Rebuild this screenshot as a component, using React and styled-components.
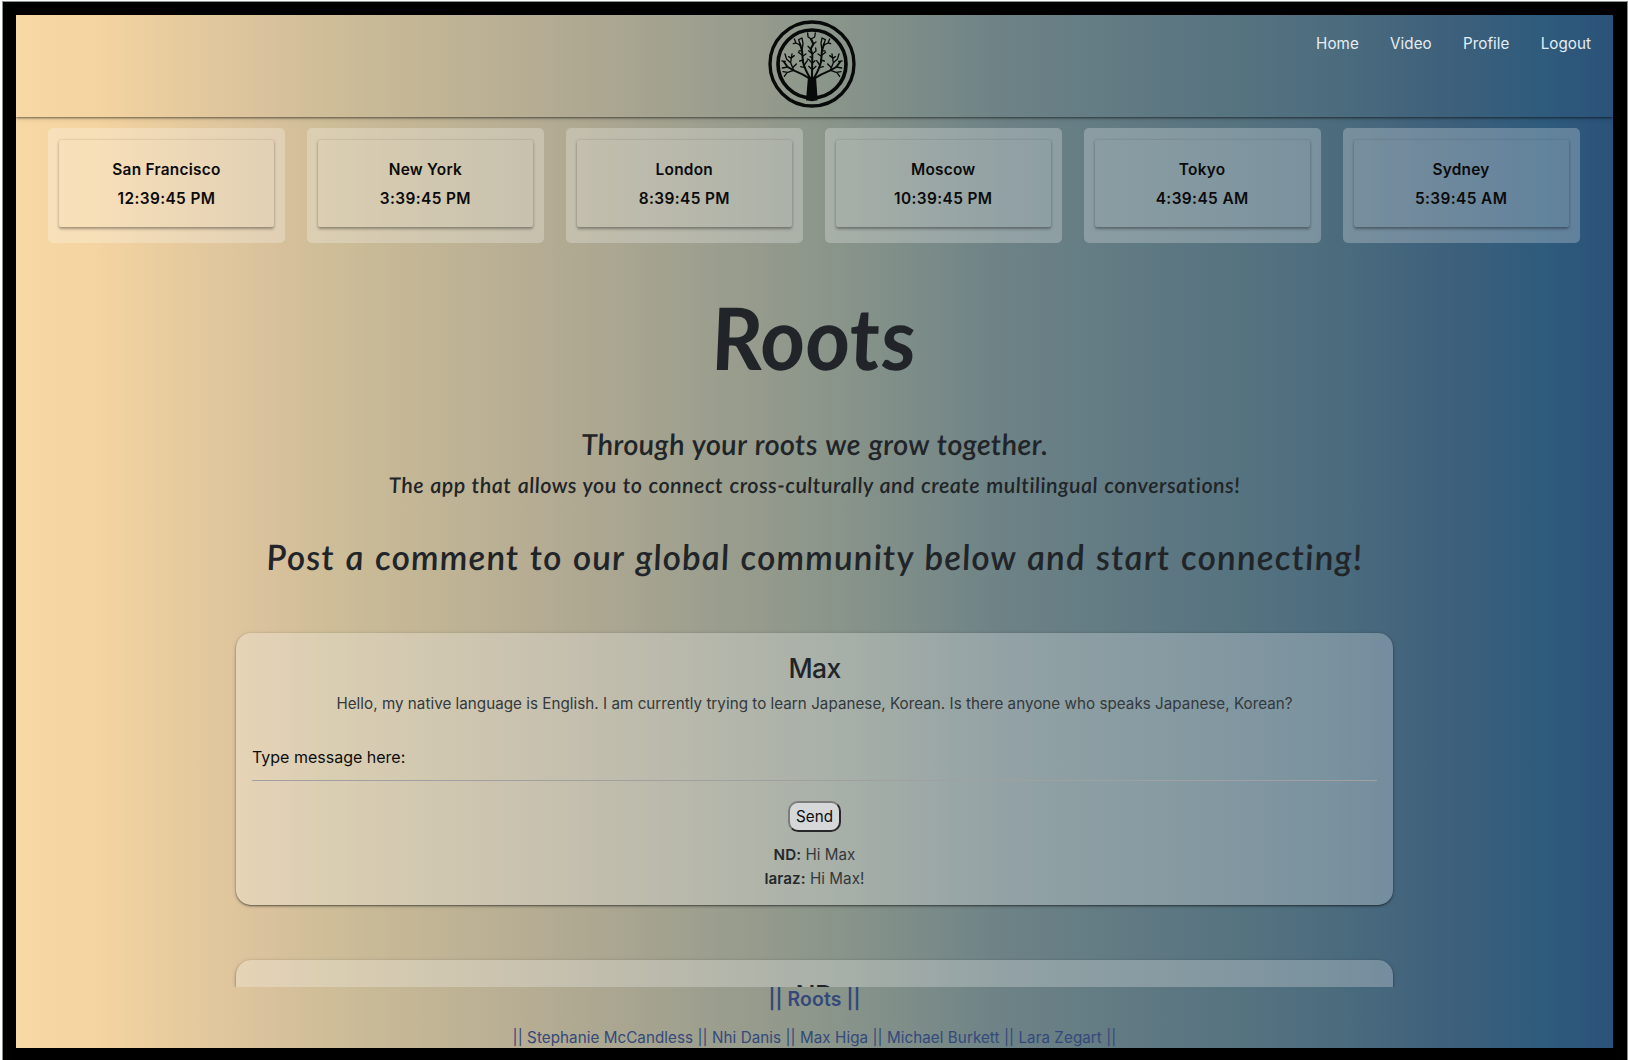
import React from "react";
import styled, { createGlobalStyle } from "styled-components";

const GlobalStyle = createGlobalStyle`
  * { box-sizing: border-box; }
  body {
    margin: 0;
    background: #fff;
    font-family: Inter, Roboto, "Liberation Sans", sans-serif;
    color: #212529;
  }
  h1, h2, h3, h4, p { margin: 0; }
`;

const Page = styled.div`
  height: 1060px;
  padding: 2px 1px 0 3px;
  overflow: hidden;
`;

const Frame = styled.div`
  display: flex;
  flex-direction: column;
  height: 1058px;
  border: solid #000;
  border-width: 13px 14px 12px 13px;
  outline: 1px solid #8a8f8f;
  background: linear-gradient(to right, #f7d9a5 0%, #f4d4a0 5%, #d8c19c 16%, #cfbe98 19%, #b0a992 35%, #88948a 52%, #6d8286 62%, #4d6d7e 82%, #3f617b 89%, #2f5b7c 95.5%, #2b5279 100%);
`;

const Header = styled.header`
  display: grid;
  grid-template-columns: 1fr auto 1fr;
  flex: none;
  height: 102px;
  box-shadow: 0 1px 2px rgba(0, 0, 0, 0.5), 0 2px 5px rgba(0, 0, 0, 0.12);
`;

const Logo = styled.svg`
  grid-column: 2;
  width: 90px;
  height: 90px;
  margin: 3.5px 6px 0 0;
`;

const Nav = styled.nav`
  display: flex;
  justify-content: flex-end;
  gap: 31.3px;
  padding: 17px 22px 0 0;
`;

const NavLink = styled.a`
  font-size: 15.2px;
  line-height: 24px;
  letter-spacing: 0.04px;
  color: #e4edf3;
`;

const Clocks = styled.section`
  display: flex;
  flex: none;
  gap: 21.5px;
  padding: 10.5px 33px 0 32px;
`;

const ClockCard = styled.article`
  flex: 1;
  height: 115.5px;
  padding: 12.5px 11.5px 16px 11px;
  border-radius: 5px;
  background: rgba(255, 255, 255, 0.25);
`;

const ClockFace = styled.div`
  height: 86.5px;
  padding-top: 16px;
  border-radius: 2px;
  box-shadow: 0 1.5px 3px rgba(0, 0, 0, 0.34), 0 0 2px rgba(0, 0, 0, 0.08);
  text-align: center;
  font-size: 15.4px;
  font-weight: 600;
  line-height: 28.5px;
  color: #0b0b0b;
`;

const City = styled.div`
  letter-spacing: 0.26px;
`;

const Time = styled.div`
  letter-spacing: 0.4px;
`;

const Hero = styled.section`
  flex: none;
  text-align: center;
  font-family: Lato, "Open Sans", sans-serif;
  font-style: italic;
  color: #212529;

  /* Relaxes the slant of the italic face so that the headings stand almost upright. */
  & > * { transform: skewX(4.5deg); }
`;

const Title = styled.h1`
  margin-top: 44px;
  padding-right: 3px;
  font-size: 86px;
  font-weight: 700;
  line-height: 100px;
`;

const Tagline = styled.h2`
  margin-top: 37px;
  font-size: 29px;
  font-weight: 600;
  line-height: 40px;
  letter-spacing: 0.26px;
  word-spacing: 1px;
`;

const Summary = styled.p`
  margin-top: 2px;
  font-size: 21.5px;
  font-weight: 600;
  line-height: 38px;
  letter-spacing: 0.46px;
  word-spacing: 0.8px;
`;

const Prompt = styled.h2`
  margin-top: 27px;
  font-size: 35px;
  font-weight: 600;
  line-height: 50px;
  letter-spacing: 1.08px;
  word-spacing: 1.4px;
`;

const Feed = styled.main`
  display: flex;
  flex-direction: column;
  flex: 1;
  min-height: 0;
  gap: 54.5px;
  padding: 52px 220px 0;
  overflow: hidden;
`;

const PostCard = styled.article`
  display: flex;
  flex-direction: column;
  align-items: center;
  flex: none;
  height: 272px;
  padding: 18px 16px 0;
  border-radius: 15px;
  background: rgba(255, 255, 255, 0.26);
  box-shadow: 0 1px 2px rgba(0, 0, 0, 0.5), 0 1px 4px rgba(0, 0, 0, 0.16);
`;

const Author = styled.h3`
  font-size: 26.5px;
  font-weight: 500;
  line-height: 34px;
  letter-spacing: -0.6px;
`;

const Message = styled.p`
  margin-top: 7px;
  font-size: 15.2px;
  line-height: 24px;
  letter-spacing: 0.03px;
  color: #33393c;
`;

const Field = styled.label`
  align-self: stretch;
  height: 44.5px;
  margin-top: 20.5px;
  padding-top: 8px;
  border-bottom: 1.5px solid #a0a0a0;
  font-size: 16px;
  line-height: 24px;
  color: #0d0d0d;
`;

const SendButton = styled.button`
  width: 53px;
  height: 31px;
  margin-top: 19.5px;
  padding: 0;
  border: 2px outset #7c7c7c;
  border-radius: 10px;
  background: #d6d7d8;
  font: 15.2px Inter, sans-serif;
  color: #0c0c0c;
`;

const Replies = styled.div`
  margin-top: 11px;
  text-align: center;
  font-size: 15.2px;
  line-height: 24px;
  letter-spacing: 0.05px;
  color: #33393c;
`;

const Reply = styled.p`
  b { font-weight: 600; color: #24292d; }
`;

const Footer = styled.footer`
  flex: none;
  height: 61px;
  text-align: center;
  color: #34497a;
`;

const FooterTitle = styled.h4`
  font-size: 19.4px;
  font-weight: 600;
  line-height: 24px;
  letter-spacing: 0.1px;
`;

const Credits = styled.p`
  margin-top: 15px;
  font-size: 15.2px;
  line-height: 24px;
  letter-spacing: 0.06px;
`;

const clocks = [
  ["San Francisco", "12:39:45 PM"],
  ["New York", "3:39:45 PM"],
  ["London", "8:39:45 PM"],
  ["Moscow", "10:39:45 PM"],
  ["Tokyo", "4:39:45 AM"],
  ["Sydney", "5:39:45 AM"],
];

const posts = [
  {
    author: "Max",
    message:
      "Hello, my native language is English. I am currently trying to learn Japanese, Korean. Is there anyone who speaks Japanese, Korean?",
    replies: [["ND:", "Hi Max"], ["laraz:", "Hi Max!"]],
  },
  { author: "ND" },
];

function TreeLogo() {
  return (
    <Logo viewBox="82 55 270 270" fill="none" stroke="#080a09" strokeLinecap="round" strokeLinejoin="round">
      <circle cx="217" cy="190" r="126" strokeWidth="10" />
      <circle cx="217" cy="190" r="102" strokeWidth="11" />
      <path d="M205 228h24l5 71q-17 5-35 0z" fill="#080a09" stroke="none" />
      <g strokeWidth="6">
        <path d="M212 235Q190 220 162 209L144 199L133 184" />
        <path d="M222 235Q244 220 272 209L290 199L301 184" />
        <path d="M211 232Q195 205 190 184L187 150L181 130" />
        <path d="M223 232Q239 205 244 184L247 150L253 130" />
        <path d="M217 234L218 160L213 145L221 130L214 115" />
      </g>
      <g strokeWidth="4">
        <path d="M162 209L153 186L157 160M153 186L141 176L136 160M144 199L128 202M162 209L142 216L134 227M144 215L130 213M155 173L147 168M157 170L164 165M137 182L127 181M161 199L170 190" />
        <path d="M272 209L281 186L277 160M281 186L293 176L298 160M290 199L306 202M272 209L292 216L300 227M290 215L304 213M279 173L287 168M277 170L270 165M297 182L307 181M273 199L264 190" />
        <path d="M187 150L190 128L187 112M183 134L169 127L164 115M181 130L177 117L187 112M169 127L161 129M188 164L176 155M191 178L180 181M187 150L178 151M194 193L203 180M193 200L183 198M190 166L199 160" />
        <path d="M247 150L244 128L247 112M251 134L265 127L270 115M253 130L257 117L247 112M265 127L273 129M246 164L258 155M243 178L254 181M247 150L256 151M240 193L231 180M241 200L251 198M244 166L235 160" />
        <path d="M214 115L205 108L204 97M214 115L225 109L227 97M221 130L229 124M213 145L205 137M218 160L207 150M218 160L229 151L228 142M218 188L208 177L203 175M218 188L226 180M218 172L211 168M218 207L207 197M218 207L229 197" />
      </g>
    </Logo>
  );
}

export default function App() {
  return (
    <Page>
      <GlobalStyle />
      <Frame>
        <Header>
          <TreeLogo />
          <Nav>
            {["Home", "Video", "Profile", "Logout"].map((label) => (
              <NavLink key={label}>{label}</NavLink>
            ))}
          </Nav>
        </Header>
        <Clocks>
          {clocks.map(([city, time]) => (
            <ClockCard key={city}>
              <ClockFace>
                <City>{city}</City>
                <Time>{time}</Time>
              </ClockFace>
            </ClockCard>
          ))}
        </Clocks>
        <Hero>
          <Title>Roots</Title>
          <Tagline>Through your roots we grow together.</Tagline>
          <Summary>The app that allows you to connect cross-culturally and create multilingual conversations!</Summary>
          <Prompt>Post a comment to our global community below and start connecting!</Prompt>
        </Hero>
        <Feed>
          {posts.map((post) => (
            <PostCard key={post.author}>
              <Author>{post.author}</Author>
              {post.message && (
                <>
                  <Message>{post.message}</Message>
                  <Field>Type message here:</Field>
                  <SendButton>Send</SendButton>
                  <Replies>
                    {post.replies.map(([who, text]) => (
                      <Reply key={who}><b>{who}</b> {text}</Reply>
                    ))}
                  </Replies>
                </>
              )}
            </PostCard>
          ))}
        </Feed>
        <Footer>
          <FooterTitle>|| Roots ||</FooterTitle>
          <Credits>|| Stephanie McCandless || Nhi Danis || Max Higa || Michael Burkett || Lara Zegart ||</Credits>
        </Footer>
      </Frame>
    </Page>
  );
}
